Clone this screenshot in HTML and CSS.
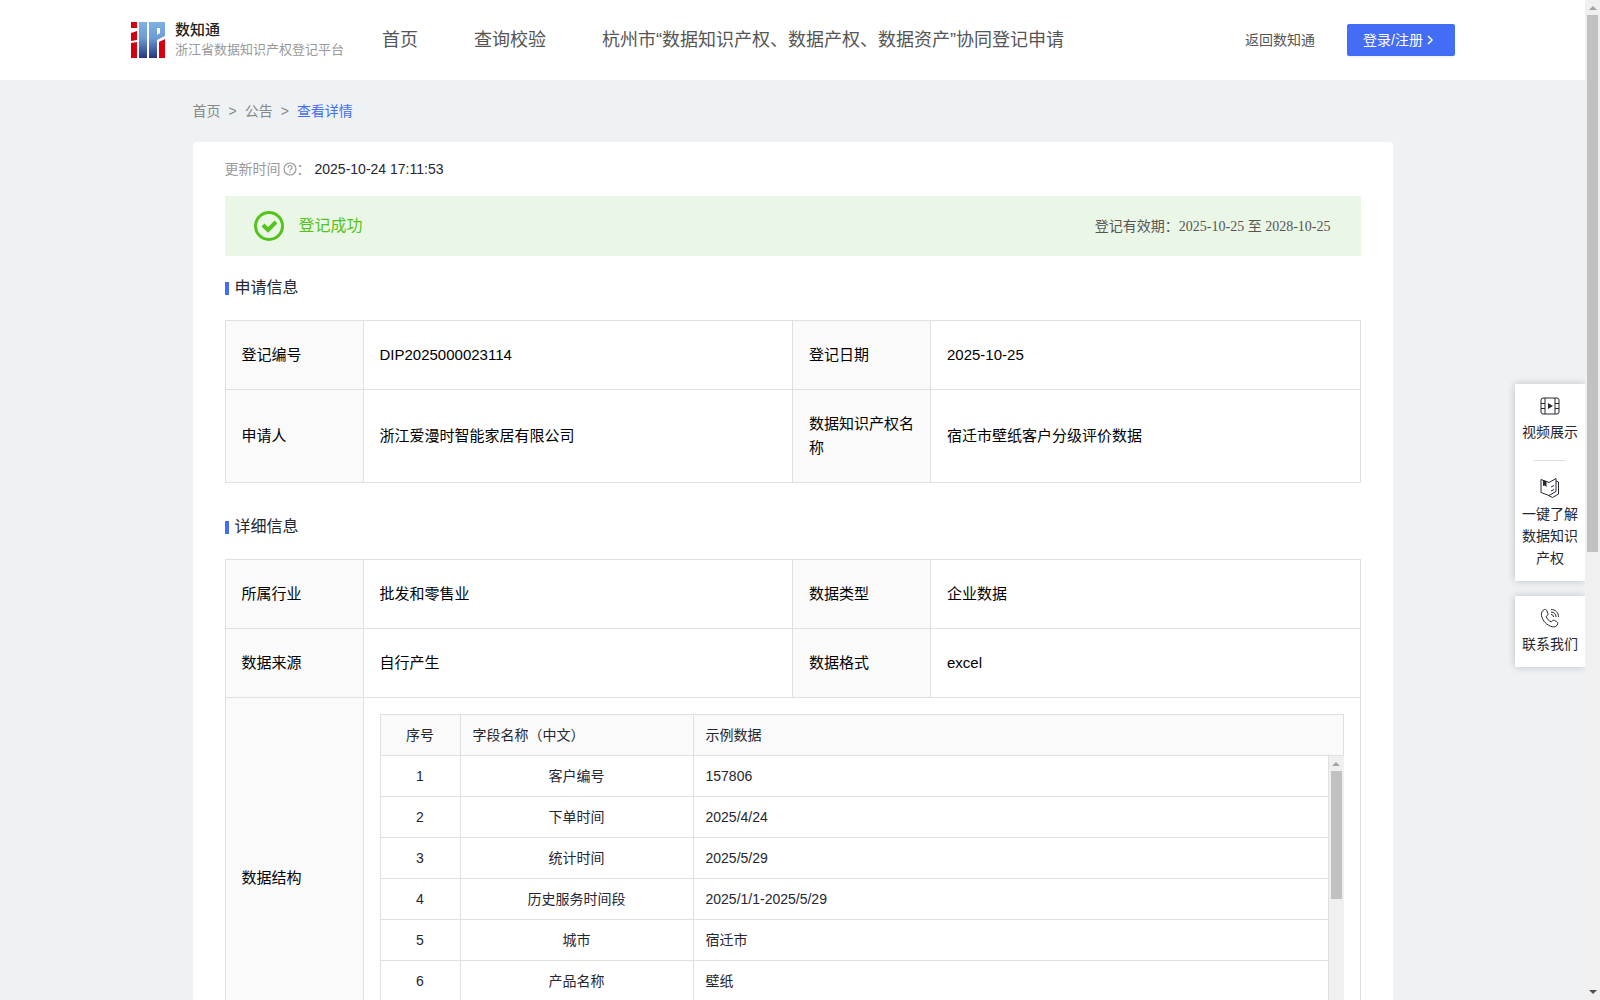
FILE: index.html
```html
<!DOCTYPE html>
<html lang="zh-CN">
<head>
  <meta charset="UTF-8" />
  <meta name="viewport" content="width=device-width, initial-scale=1" />
  <title>浙江省数据知识产权登记平台</title>
  <link rel="stylesheet" href="styles.css">
</head>
<body>
  <div class="page">
    <header class="header">
      <a class="logo" href="#">
        <svg class="logo-icon" viewBox="0 0 34 36" width="34" height="36" aria-hidden="true">
          <defs>
            <linearGradient id="logoBlue" x1="0" y1="0" x2="0" y2="1">
              <stop offset="0" stop-color="#7fb0e6" />
              <stop offset="0.45" stop-color="#6d9bd6" />
              <stop offset="1" stop-color="#27367f" />
            </linearGradient>
          </defs>
          <path fill="#d4000f" d="M0 0h6v6H0zM0 11l6-2v9l-6 1zM0 21l6-1v16H0zM28 20l6-3v19h-6z" />
          <path fill="url(#logoBlue)" fill-rule="evenodd" d="M8 0h8v36H8zM18 0h16v14l-8 4v18h-8zM26 6v7l3-2V6z" />
        </svg>
        <span class="logo-text">
          <strong>数知通</strong>
          <small>浙江省数据知识产权登记平台</small>
        </span>
      </a>
      <nav class="nav">
        <a href="#">首页</a>
        <a href="#">查询校验</a>
        <a href="#">杭州市“数据知识产权、数据产权、数据资产”协同登记申请</a>
      </nav>
      <div class="header-right">
        <a class="back-link" href="#">返回数知通</a>
        <button class="login-btn" type="button">登录/注册
          <svg viewBox="0 0 10 10" width="10" height="10" aria-hidden="true"><path d="M3 1l4 4-4 4" /></svg>
        </button>
      </div>
    </header>

    <main class="main">
      <nav class="breadcrumb">
        <a href="#">首页</a><span>&gt;</span><a href="#">公告</a><span>&gt;</span><a class="current" href="#">查看详情</a>
      </nav>

      <div class="card">
        <div class="update">
          <span class="update-label">更新时间</span>
          <svg viewBox="0 0 14 14" width="14" height="14" aria-hidden="true">
            <circle cx="7" cy="7" r="6" />
            <path d="M5 5.600a2 2 0 1 1 2.900 1.700c-.6.3-.9.6-.9 1.200M7 9.600v1.200" />
          </svg>
          <span class="update-label">：</span>
          <span class="update-time">2025-10-24 17:11:53</span>
        </div>

        <div class="banner">
          <svg viewBox="0 0 30 30" width="30" height="30" aria-hidden="true">
            <circle cx="15" cy="15" r="13.500" />
            <path class="tick" d="M9 14l5 5 8-8" />
          </svg>
          <span class="banner-title">登记成功</span>
          <span class="banner-date">登记有效期：<time>2025-10-25 至 2028-10-25</time></span>
        </div>

        <h2 class="section-title">申请信息</h2>
        <table class="info">
          <colgroup><col class="col-label"><col><col class="col-label"><col></colgroup>
          <tr>
            <th>登记编号</th><td>DIP2025000023114</td>
            <th>登记日期</th><td>2025-10-25</td>
          </tr>
          <tr>
            <th>申请人</th><td>浙江爱漫时智能家居有限公司</td>
            <th>数据知识产权名称</th><td>宿迁市壁纸客户分级评价数据</td>
          </tr>
        </table>

        <h2 class="section-title">详细信息</h2>
        <table class="info">
          <colgroup><col class="col-label"><col><col class="col-label"><col></colgroup>
          <tr>
            <th>所属行业</th><td>批发和零售业</td>
            <th>数据类型</th><td>企业数据</td>
          </tr>
          <tr>
            <th>数据来源</th><td>自行产生</td>
            <th>数据格式</th><td>excel</td>
          </tr>
          <tr>
            <th>数据结构</th>
            <td class="nested" colspan="3">
              <div class="fields-head">
                <table class="fields">
                  <colgroup><col class="col-no"><col class="col-name"><col></colgroup>
                  <tr><th>序号</th><th>字段名称（中文）</th><th>示例数据</th></tr>
                </table>
              </div>
              <div class="fields-body">
                <table class="fields">
                  <colgroup><col class="col-no"><col class="col-name"><col></colgroup>
                  <tr><td>1</td><td>客户编号</td><td>157806</td></tr>
                  <tr><td>2</td><td>下单时间</td><td>2025/4/24</td></tr>
                  <tr><td>3</td><td>统计时间</td><td>2025/5/29</td></tr>
                  <tr><td>4</td><td>历史服务时间段</td><td>2025/1/1-2025/5/29</td></tr>
                  <tr><td>5</td><td>城市</td><td>宿迁市</td></tr>
                  <tr><td>6</td><td>产品名称</td><td>壁纸</td></tr>
                </table>
                <div class="scrollbar" aria-hidden="true">
                  <i class="arrow-up"></i>
                  <div class="track"><div class="thumb" style="height: 50%"></div></div>
                  <i class="arrow-down"></i>
                </div>
              </div>
            </td>
          </tr>
        </table>
      </div>
    </main>

    <aside class="side">
      <div class="side-box">
        <a class="side-item" href="#">
          <svg viewBox="0 0 20 20" width="20" height="20" aria-hidden="true">
            <rect x="1" y="2" width="18" height="16" rx="2" />
            <path d="M5 2v16M15 2v16M1 7.500h4M1 12.500h4M15 7.500h4M15 12.500h4" />
            <path class="solid" d="M8 7l5 3-5 3z" />
          </svg>
          视频展示
        </a>
        <hr>
        <a class="side-item" href="#">
          <svg viewBox="0 0 20 20" width="20" height="20" aria-hidden="true">
            <path d="M1 1.500l8 3 7-4v13l-7 4-8-3zM16 3l2.500 1v12l-6 3.500-4-2M11 9l3-1.500M11 13l3-1.500" />
            <path class="solid" d="M3 2l3.500 1.200v6L4.800 7.500 3 8z" />
          </svg>
          一键了解数据知识产权
        </a>
      </div>
      <div class="side-box">
        <a class="side-item" href="#">
          <svg viewBox="0 0 20 20" width="20" height="20" aria-hidden="true">
            <path d="M4.500 1.500C2 2.500 1 5 1.500 7.500 2.500 13 7 17.500 12.500 18.800c2.500.5 4.500-.8 5.200-2.800.3-1-.2-1.800-1-2.300l-2-1.200c-1-.6-2-.3-2.600.6l-.6.8C9 13 7 11 6.200 8.500l1-.8c.8-.6 1-1.500.6-2.500l-1-2.500C6.300 1.500 5.500 1.100 4.500 1.500z" />
            <path d="M11 1.500c4.500 0 7.500 3 7.500 7.500M11 4c3 0 5 2 5 5M11 6.500c1.500 0 2.500 1 2.500 2.500" />
          </svg>
          联系我们
        </a>
      </div>
    </aside>
  </div>

  <div class="scrollbar" aria-hidden="true">
    <i class="arrow-up"></i>
    <div class="track"><div class="thumb" style="height: 55.4%"></div></div>
    <i class="arrow-down"></i>
  </div>
</body>
</html>
```

FILE: styles.css
```css
* {
  box-sizing: border-box;
}
body {
  display: flex;
  height: 100vh;
  margin: 0;
  overflow: hidden;
  background: #eef2f5;
  color: #252631;
  font-family: "Liberation Sans", "Noto Sans CJK SC", sans-serif;
  font-size: 14px;
  line-height: 22px;
}
a {
  color: inherit;
  text-decoration: none;
}
svg {
  flex: none;
  fill: none;
  stroke: currentColor;
}
.page {
  position: relative;
  flex: 1;
  min-width: 0;
  overflow: hidden;
}

/* scrollbars */
.scrollbar {
  display: flex;
  flex: none;
  flex-direction: column;
  align-items: center;
  width: 15px;
  padding: 6px 2px;
  background: #f0f0f0;
}
.track {
  flex: 1;
  width: 11px;
  margin: 5px 0;
}
.thumb {
  background: #c1c1c1;
}
.arrow-up,
.arrow-down {
  border: 4px solid transparent;
}
.arrow-up {
  border-top: none;
  border-bottom-color: #a3a3a3;
}
.arrow-down {
  border-top-color: #505050;
  border-bottom: none;
}

/* header */
.header {
  display: flex;
  align-items: center;
  height: 80px;
  padding: 0 130px;
  background: #fff;
}
.logo {
  display: flex;
  align-items: center;
  gap: 10px;
  width: 252px;
  padding-left: 1px;
}
.logo-icon {
  stroke: none;
}
.logo-text {
  display: flex;
  flex-direction: column;
  white-space: nowrap;
}
.logo-text strong {
  color: #222;
  font-size: 15px;
  font-weight: 500;
  line-height: 20px;
}
.logo-text small {
  color: #999;
  font-size: 13px;
  line-height: 20px;
}
.nav {
  display: flex;
  flex: 1;
  gap: 56px;
  color: #555;
  font-size: 18px;
  white-space: nowrap;
}
.header-right {
  display: flex;
  align-items: center;
  gap: 32px;
  color: #555;
  white-space: nowrap;
}
.login-btn {
  display: flex;
  align-items: center;
  gap: 2px;
  height: 32px;
  padding: 0 20px 0 16px;
  border: none;
  border-radius: 2px;
  background: #446df6;
  box-shadow: 0 2px 0 rgba(0, 0, 0, 0.04);
  color: #fff;
  font: inherit;
  cursor: pointer;
}
.login-btn svg {
  stroke-width: 1.5;
}

/* page */
.main {
  max-width: 1200px;
  margin: 0 auto;
}
.breadcrumb {
  display: flex;
  gap: 8px;
  padding: 20px 0;
  color: #888;
}
.breadcrumb .current {
  color: #446df6;
}
.card {
  padding: 16px 32px 32px;
  border-radius: 4px;
  background: #fff;
}
.update {
  display: flex;
  align-items: center;
  margin-bottom: 16px;
}
.update svg {
  margin-left: 2px;
  stroke-width: 1.2;
}
.update svg,
.update-label {
  color: #999;
}
.update-time {
  margin-left: 4px;
}
.banner {
  display: flex;
  align-items: center;
  height: 60px;
  padding: 0 30px 0 29px;
  background: #ebf7e6;
}
.banner svg {
  color: #52c41a;
  stroke-width: 3;
}
.banner .tick {
  stroke-width: 4;
}
.banner-title {
  flex: 1;
  margin-left: 15px;
  color: #52c41a;
  font-size: 16px;
}
.banner-date {
  color: #555;
}
.banner-date time {
  font-family: "Liberation Serif", "Noto Sans CJK SC", serif;
}
.section-title {
  display: flex;
  align-items: center;
  gap: 6px;
  margin: 20px 0;
  font-size: 16px;
  font-weight: 400;
  line-height: 24px;
}
.section-title::before {
  width: 4px;
  height: 13px;
  background: #446df6;
  content: "";
}
.info + .section-title {
  margin-top: 32px;
}

/* info tables */
table {
  width: 100%;
  border-collapse: collapse;
  table-layout: fixed;
}
th {
  background: #fafafa;
  font-weight: 400;
  text-align: left;
}
.info > tbody > tr > th,
.info > tbody > tr > td {
  padding: 22px 16px;
  border: 1px solid #e0e0e0;
  color: #000;
  font-size: 15px;
  line-height: 24px;
}
.info > tbody > tr > .nested {
  padding: 16px;
}
.col-label {
  width: 138px;
}
.fields-head {
  border: 1px solid #e0e0e0;
}
.fields-body {
  display: flex;
  height: 286px;
  overflow: hidden;
  border-left: 1px solid #e0e0e0;
}
.fields {
  flex: 1;
  align-self: flex-start;
  border-collapse: separate;
  border-spacing: 0;
}
.fields th,
.fields td {
  height: 41px;
  padding: 9px 12px;
  border-right: 1px solid #e0e0e0;
  color: #252631;
  font-size: 14px;
  line-height: 22px;
}
.fields th {
  height: 40px;
}
.fields td {
  border-bottom: 1px solid #e0e0e0;
}
.fields th:last-child {
  border-right: none;
}
.fields th:first-child,
.fields td:first-child,
.fields td:nth-child(2) {
  text-align: center;
}
.col-no {
  width: 80px;
}
.col-name {
  width: 233px;
}

/* floating menu */
.side {
  position: absolute;
  top: 384px;
  right: 0;
  display: flex;
  flex-direction: column;
  gap: 15px;
  width: 70px;
}
.side-box {
  padding: 12px 7px;
  background: #fff;
  box-shadow: 0 0 8px rgba(0, 0, 0, 0.2);
}
.side-item {
  display: flex;
  flex-direction: column;
  align-items: center;
  gap: 5px;
  text-align: center;
}
.side-box hr {
  width: 32px;
  margin: 17px auto;
  border: none;
  border-top: 1px solid #ddd;
}
.side-item .solid {
  fill: currentColor;
  stroke: none;
}
```
